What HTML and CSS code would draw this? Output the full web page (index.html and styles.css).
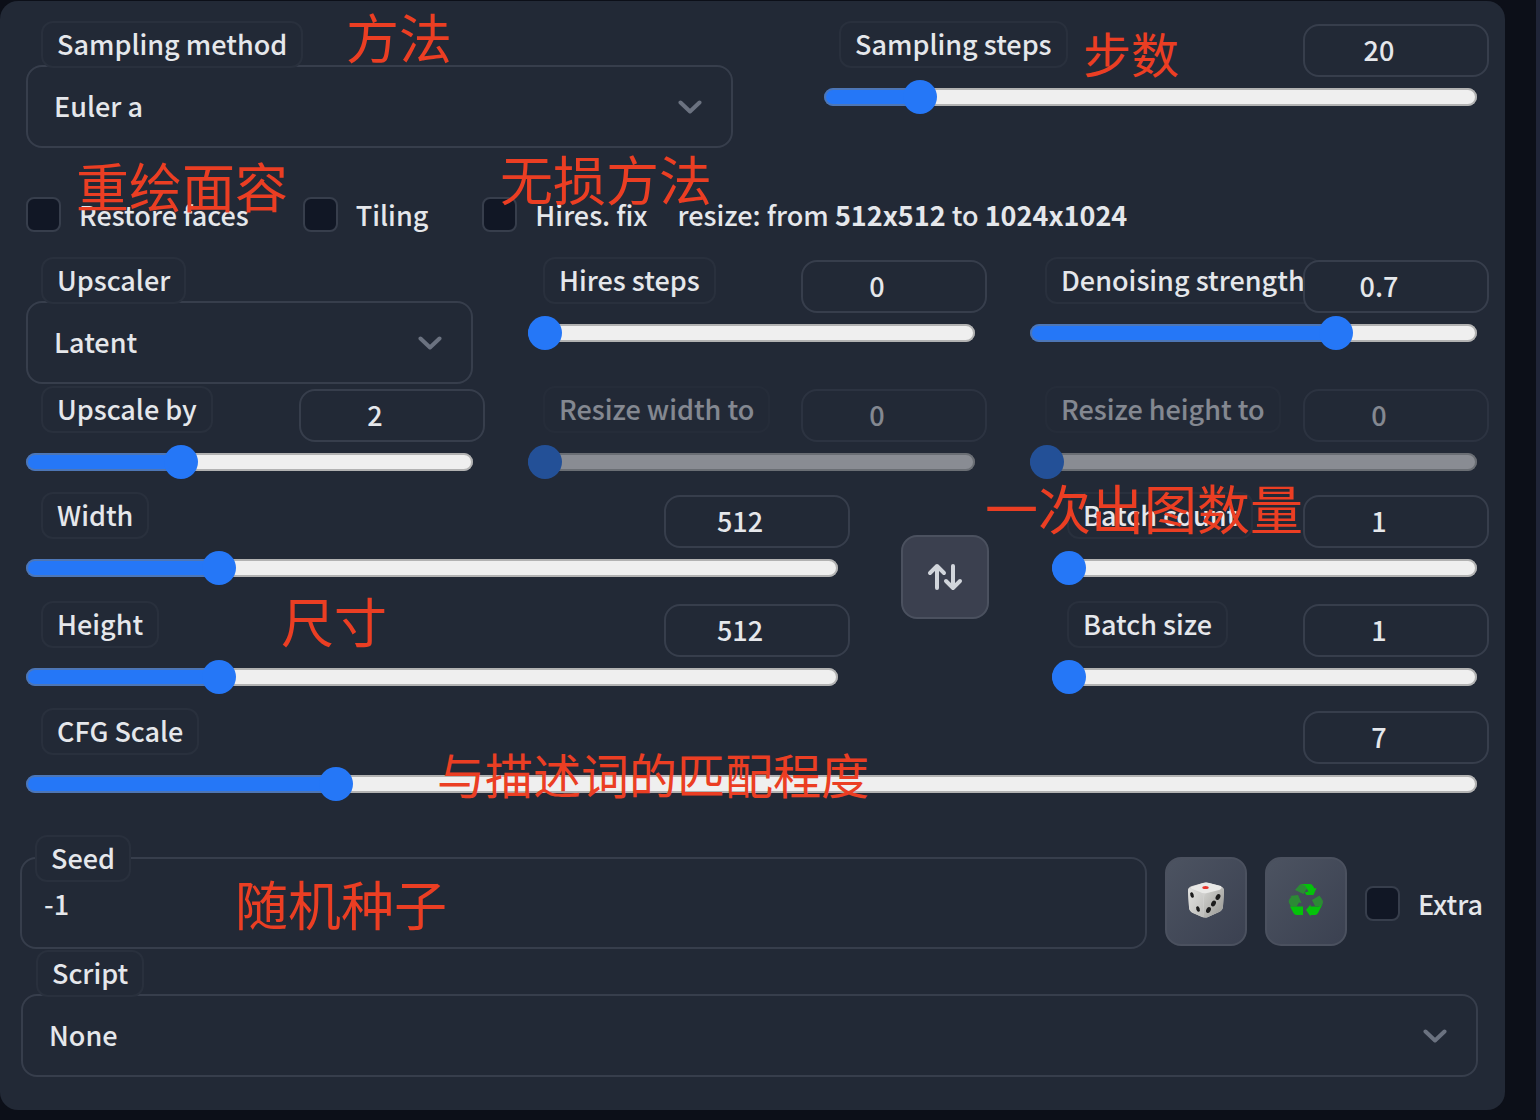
FILE: index.html
```html
<!DOCTYPE html>
<html lang="en">
<head>
<meta charset="utf-8">
<meta name="viewport" content="width=device-width, initial-scale=1">
<title>Generation settings</title>
<link rel="stylesheet" href="styles.css">
</head>
<body>
<main class="panel">
  <form class="settings">
    <div class="row row-sampling">
      <div class="field">
        <label class="chip" for="method">Sampling method</label>
        <div class="select">
          <select id="method"><option>Euler a</option></select>
          <svg class="chevron" viewBox="0 0 24 14" aria-hidden="true"><path d="M2.5 2.5 12 11.5 21.5 2.5"/></svg>
        </div>
      </div>
      <div class="slider">
        <div class="slider-head">
          <label class="chip" for="steps">Sampling steps</label>
          <input class="number" type="number" value="20" aria-label="Sampling steps value">
        </div>
        <input id="steps" type="range" min="1" max="150" value="20" style="--fill:.1275">
      </div>
    </div>

    <div class="checks">
      <label class="check"><input type="checkbox">Restore faces</label>
      <label class="check"><input type="checkbox">Tiling</label>
      <div class="hires">
        <label class="check"><input type="checkbox">Hires. fix</label>
        <span>resize: from <b>512x512</b> to <b>1024x1024</b></span>
      </div>
    </div>

    <div class="row row-thirds">
      <div class="field">
        <label class="chip" for="upscaler">Upscaler</label>
        <div class="select">
          <select id="upscaler"><option>Latent</option></select>
          <svg class="chevron" viewBox="0 0 24 14" aria-hidden="true"><path d="M2.5 2.5 12 11.5 21.5 2.5"/></svg>
        </div>
      </div>
      <div class="slider">
        <div class="slider-head">
          <label class="chip" for="hires-steps">Hires steps</label>
          <input class="number" type="number" value="0" aria-label="Hires steps value">
        </div>
        <input id="hires-steps" type="range" min="0" max="150" value="0" style="--fill:0">
      </div>
      <div class="slider">
        <div class="slider-head">
          <label class="chip" for="denoise">Denoising strength</label>
          <input class="number" type="number" step="0.01" value="0.7" aria-label="Denoising strength value">
        </div>
        <input id="denoise" type="range" min="0" max="1" step="0.01" value="0.7" style="--fill:.7">
      </div>
    </div>

    <div class="row row-thirds row-resize">
      <div class="slider">
        <div class="slider-head">
          <label class="chip" for="upscale-by">Upscale by</label>
          <input class="number" type="number" value="2" aria-label="Upscale by value">
        </div>
        <input id="upscale-by" type="range" min="1" max="4" step="0.05" value="2" style="--fill:.3333">
      </div>
      <div class="slider slider-off">
        <div class="slider-head">
          <label class="chip" for="resize-w">Resize width to</label>
          <input class="number" type="number" value="0" disabled aria-label="Resize width value">
        </div>
        <input id="resize-w" type="range" min="0" max="2048" value="0" disabled style="--fill:0">
      </div>
      <div class="slider slider-off">
        <div class="slider-head">
          <label class="chip" for="resize-h">Resize height to</label>
          <input class="number" type="number" value="0" disabled aria-label="Resize height value">
        </div>
        <input id="resize-h" type="range" min="0" max="2048" value="0" disabled style="--fill:0">
      </div>
    </div>

    <div class="row row-size">
      <div class="stack">
        <div class="slider">
          <div class="slider-head">
            <label class="chip" for="width">Width</label>
            <input class="number" type="number" value="512" aria-label="Width value">
          </div>
          <input id="width" type="range" min="64" max="2048" step="8" value="512" style="--fill:.2258">
        </div>
        <div class="slider">
          <div class="slider-head">
            <label class="chip" for="height">Height</label>
            <input class="number" type="number" value="512" aria-label="Height value">
          </div>
          <input id="height" type="range" min="64" max="2048" step="8" value="512" style="--fill:.2258">
        </div>
      </div>
      <button class="swap" type="button" aria-label="Swap width and height">
        <svg viewBox="0 0 36 30" aria-hidden="true"><path d="M10 26V4M3 11l7-7 7 7M26 4v22M19 19l7 7 7-7"/></svg>
      </button>
      <div class="stack">
        <div class="slider">
          <div class="slider-head">
            <label class="chip" for="batch-count">Batch count</label>
            <input class="number" type="number" value="1" aria-label="Batch count value">
          </div>
          <input id="batch-count" type="range" min="1" max="100" value="1" style="--fill:0">
        </div>
        <div class="slider">
          <div class="slider-head">
            <label class="chip" for="batch-size">Batch size</label>
            <input class="number" type="number" value="1" aria-label="Batch size value">
          </div>
          <input id="batch-size" type="range" min="1" max="8" value="1" style="--fill:0">
        </div>
      </div>
    </div>

    <div class="slider slider-cfg">
      <div class="slider-head">
        <label class="chip" for="cfg">CFG Scale</label>
        <input class="number" type="number" value="7" aria-label="CFG Scale value">
      </div>
      <input id="cfg" type="range" min="1" max="30" step="0.5" value="7" style="--fill:.2069">
    </div>

    <div class="seed-row">
      <div class="field seed">
        <label class="chip" for="seed">Seed</label>
        <input id="seed" class="seed-input" type="text" value="-1">
      </div>
      <button class="tool" type="button" aria-label="Random seed">
        <svg viewBox="0 0 36 36" aria-hidden="true">
          <defs>
            <linearGradient id="die-left" x1="0" y1="0" x2="1" y2="1"><stop offset="0" stop-color="#e2e2e0"/><stop offset="1" stop-color="#bdbdba"/></linearGradient>
            <linearGradient id="die-right" x1="0" y1="0" x2="1" y2="1"><stop offset="0" stop-color="#d2d2cf"/><stop offset="1" stop-color="#979793"/></linearGradient>
          </defs>
          <path fill="#d0d0ce" d="M4 4 15 1Q18 0 21 1L32 4Q36 5 36 9L35 24Q35 28 31 30L20 35Q17 36 14 35L5 31Q1 29 1 25L0 9Q0 5 4 4Z"/>
          <path fill="url(#die-left)" d="M1 6 12 11Q15 12 15 16L16 35Q14 35 12 34L5 31Q1 29 1 25L0 9Q0 7 1 6Z"/>
          <path fill="url(#die-right)" d="M35 6 19 11Q16 12 16 16L16 35Q18 36 20 35L31 30Q35 28 35 24L36 9Q36 7 35 6Z"/>
          <path fill="#e9e9e7" d="M3 5 15 1Q18 0 21 1L33 4Q34 7 31 8L19 11Q15 12 12 10L4 7Q2 6 3 5Z"/>
          <ellipse cx="17.500" cy="5.500" rx="3.200" ry="1.600" fill="#e8342c"/>
          <g fill="#1c1c1c">
            <ellipse cx="4" cy="13" rx="1.700" ry="2.800" transform="rotate(-18 4 13)"/>
            <ellipse cx="10" cy="27" rx="1.700" ry="2.900" transform="rotate(-18 10 27)"/>
            <ellipse cx="30" cy="15" rx="2.200" ry="3.100" transform="rotate(28 30 15)"/>
            <ellipse cx="25.500" cy="21.500" rx="2.200" ry="3.100" transform="rotate(28 25.500 21.500)"/>
            <ellipse cx="20.500" cy="28" rx="2.200" ry="3.100" transform="rotate(28 20.500 28)"/>
          </g>
        </svg>
      </button>
      <button class="tool" type="button" aria-label="Reuse seed">
        <svg viewBox="0 0 36 36" aria-hidden="true">
          <path fill="#2c8a35" d="M10.500 4Q11.500 2 14 2H18L20 5 15.500 12 7 8Z"/>
          <path fill="#04c20a" d="M14 2H22Q24 2 25 4L26.500 6.500 28.500 6 25.500 13H18.500L16.500 10.500 20.500 9.500 17 3.500Z"/>
          <path fill="#2c8a35" d="M1.500 14 10 13 13.500 21 11 20.500 8.500 24.500H3L1 21Q0 19 1.500 17L3.500 14.500Z"/>
          <path fill="#04c20a" d="M2 24.500H15V33H8.500Q6.500 33 5.500 31Z"/>
          <path fill="#2c8a35" d="M24 18 31.500 13.500 34.500 18Q35.500 20 34.500 22L33 24H27Z"/>
          <path fill="#04c20a" d="M34.500 22 30 31Q29 33 27 33H22.500V34.500L18 28 22.500 22.500V24.500H30Q33 24.500 34.500 22Z"/>
        </svg>
      </button>
      <label class="check check-extra"><input type="checkbox">Extra</label>
    </div>

    <div class="field script">
      <label class="chip" for="script">Script</label>
      <div class="select">
        <select id="script"><option>None</option></select>
        <svg class="chevron" viewBox="0 0 24 14" aria-hidden="true"><path d="M2.5 2.5 12 11.5 21.5 2.5"/></svg>
      </div>
    </div>
  </form>

  <div class="notes" lang="zh-CN">
    <span class="note note-method">方法</span>
    <span class="note note-small note-steps">步数</span>
    <span class="note note-faces">重绘面容</span>
    <span class="note note-hires">无损方法</span>
    <span class="note note-batch">一次出图数量</span>
    <span class="note note-size">尺寸</span>
    <span class="note note-small note-cfg">与描述词的匹配程度</span>
    <span class="note note-seed">随机种子</span>
  </div>
</main>
<div class="edge"></div>
</body>
</html>
```
FILE: styles.css
```css
:root {
  --page: #0c0f18;
  --panel: #222936;
  --line: #373e4c;
  --line-faint: #29303d;
  --text: #e5e7eb;
  --blue: #2577f7;
  --note: #eb3e23;
}

* { box-sizing: border-box; }

body {
  margin: 0;
  min-height: 100vh;
  display: flex;
  align-items: stretch;
  background: var(--page);
  color: var(--text);
  font: 500 27px/36px "Noto Sans CJK SC", "Noto Sans", sans-serif;
}

input, select, button {
  font: inherit;
  color: inherit;
  margin: 0;
}

.panel {
  position: relative;
  flex: 1;
  margin: 1px 31px 10px 0;
  padding: 20px 28px 33px 26px;
  background: var(--panel);
  border-radius: 18px;
}

.edge { width: 4px; background: #202538; }

.row { display: grid; align-items: start; }
.row-sampling { grid-template-columns: 707fr 653fr; column-gap: 91px; }
.row-thirds { grid-template-columns: repeat(3, minmax(0, 1fr)); column-gap: 55px; }
.row-resize { margin-top: 2px; }
.row-size {
  grid-template-columns: 812fr 88px 425fr;
  column-gap: 63px;
  margin-top: 13px;
}
.stack { display: grid; gap: 16px; }

/* Labelled chip that sits on a field's top edge */
.chip {
  position: relative;
  z-index: 1;
  display: block;
  width: max-content;
  height: 47px;
  margin-left: 15px;
  padding: 3px 14px 5px;
  border: 2px solid var(--line-faint);
  border-radius: 12px;
  background: var(--panel);
  white-space: nowrap;
}

.select { display: grid; align-items: center; margin-top: -3px; }
.select > * { grid-area: 1 / 1; }
.select select {
  width: 100%;
  height: 83px;
  padding: 0 64px 2px 26px;
  appearance: none;
  background: transparent;
  border: 2px solid var(--line);
  border-radius: 16px;
}
.chevron {
  justify-self: end;
  width: 24px;
  height: 14px;
  margin-right: 31px;
  fill: none;
  stroke: #6b7280;
  stroke-width: 4;
  stroke-linecap: round;
  stroke-linejoin: round;
  pointer-events: none;
}

/* Slider */
.slider-head { display: grid; height: 59px; align-items: start; }
.slider-head > * { grid-area: 1 / 1; }
.number {
  position: relative;
  z-index: 2;
  justify-self: end;
  width: 186px;
  height: 53px;
  margin: 3px -12px 0 0;
  padding: 0 34px 2px 0;
  text-align: center;
  appearance: textfield;
  background: var(--panel);
  border: 2px solid var(--line);
  border-radius: 16px;
}
.number::-webkit-inner-spin-button { display: none; }

input[type="range"] {
  display: block;
  width: 100%;
  height: 34px;
  appearance: none;
  background: transparent;
}
input[type="range"]::-webkit-slider-runnable-track {
  height: 18px;
  border-radius: 9px;
  background: linear-gradient(to right, var(--blue) calc(17px + (100% - 34px) * var(--fill)), #efefef 0);
  box-shadow: inset 0 0 0 2px rgba(118, 118, 118, .5);
}
input[type="range"]::-webkit-slider-thumb {
  appearance: none;
  width: 34px;
  height: 34px;
  margin-top: -8px;
  border-radius: 50%;
  background: var(--blue);
}

.slider-off .chip,
.slider-off .number,
.slider-off input[type="range"] { opacity: .5; }

.slider-cfg { margin-top: 14px; }

/* Tick boxes */
.checks {
  display: flex;
  align-items: center;
  gap: 54px;
  height: 35px;
  margin: 49px 0 25px;
  white-space: nowrap;
}
.hires { display: flex; align-items: center; gap: 30px; }
.check { display: flex; align-items: center; gap: 18px; }
.check input {
  flex: none;
  width: 35px;
  height: 35px;
  appearance: none;
  background: #111725;
  border: 2px solid var(--line);
  border-radius: 8px;
}

/* Buttons */
.swap, .tool {
  display: grid;
  place-items: center;
  padding: 0;
  border: 2px solid #4b515f;
  border-radius: 16px;
}
.swap {
  width: 88px;
  height: 84px;
  margin-top: 43px;
  background: #3b404f;
}
.swap svg {
  width: 36px;
  height: 30px;
  fill: none;
  stroke: #d1d5db;
  stroke-width: 4;
  stroke-linecap: round;
  stroke-linejoin: round;
}
.tool {
  flex: none;
  width: 82px;
  height: 89px;
  margin-top: 22px;
  background: linear-gradient(to bottom right, #4c5361, #3b4151);
}
.tool svg { width: 36px; height: 36px; margin-bottom: 3px; }

/* Seed and script */
.seed-row {
  display: flex;
  align-items: flex-start;
  gap: 18px;
  margin: 34px -6px 0;
}
.seed { flex: 1; }
.seed-input {
  display: block;
  width: 100%;
  height: 92px;
  margin-top: -25px;
  padding: 0 22px;
  background: transparent;
  border: 2px solid var(--line);
  border-radius: 16px;
}
.check-extra { height: 35px; margin-top: 51px; }
.script { margin: 1px -1px 0 -5px; }

/* Red annotations laid over the form */
.note {
  position: absolute;
  color: var(--note);
  font-size: 53px;
  font-weight: 400;
  line-height: 1;
  white-space: nowrap;
  z-index: 3;
  pointer-events: none;
}
.note-small { font-size: 48px; }
.note-method { left: 346px; top: 9px; }
.note-steps { left: 1083px; top: 27px; }
.note-faces { left: 76px; top: 158px; }
.note-hires { left: 500px; top: 151px; }
.note-batch { left: 985px; top: 480px; }
.note-size { left: 281px; top: 593px; }
.note-cfg { left: 437px; top: 748px; }
.note-seed { left: 235px; top: 876px; }
```
